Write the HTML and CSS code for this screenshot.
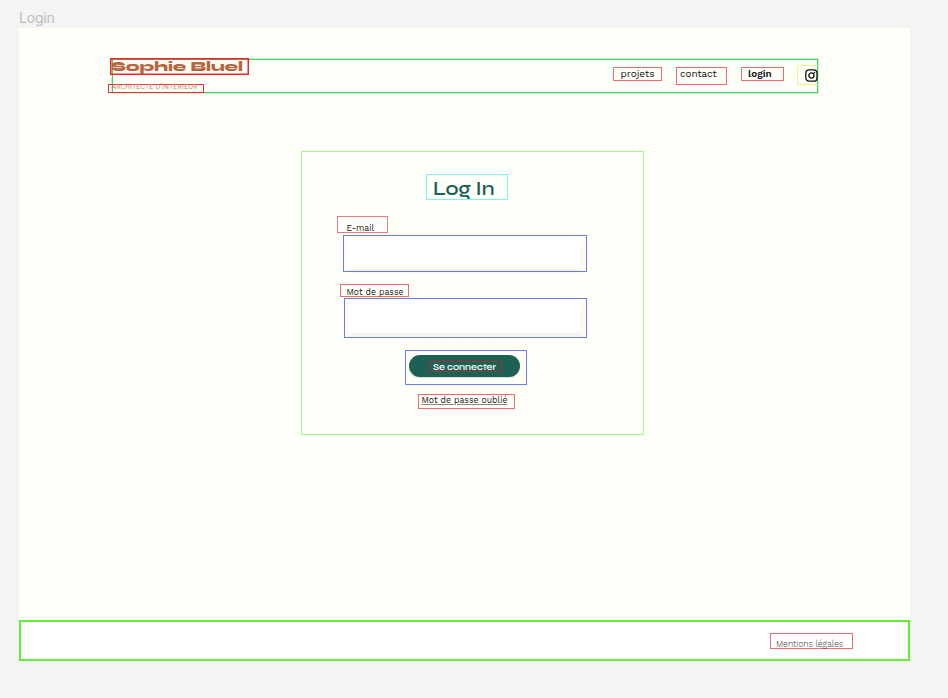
FILE: index.html
```html
<!DOCTYPE html>
<html lang="fr">
<head>
<meta charset="utf-8">
<title>Login</title>
<link rel="stylesheet" href="styles.css">
</head>
<body>
<div class="frame-name">Login</div>
<div class="board">
  <header class="header">
    <div class="brand">
      <h1 class="box brand-name"><svg width="136" height="16" viewBox="0 0 136 16"><text x="0.5" y="12" textLength="131.5" lengthAdjust="spacingAndGlyphs">Sophie Bluel</text></svg></h1>
      <p class="box tagline"><svg width="94" height="7" viewBox="0 0 94 7"><text x="2.5" y="4" textLength="86">ARCHITECTE D’INTÉRIEUR</text></svg></p>
    </div>
    <nav class="nav">
      <a class="box projets">projets</a>
      <a class="box contact">contact</a>
      <a class="box login">login</a>
      <a class="box insta"><svg width="13" height="13" viewBox="0 0 13 13" fill="none" stroke="#111" stroke-width="1.3"><rect x=".8" y=".8" width="11.2" height="11.4" rx="3.3"/><circle cx="6.4" cy="6.5" r="2.6"/><circle cx="9.5" cy="3.4" r=".75" fill="#111" stroke="none"/></svg></a>
    </nav>
  </header>
  <main>
    <form class="form">
      <h2 class="box form-title"><svg width="80" height="24" viewBox="0 0 80 24"><text x="6" y="19.6" textLength="61.5" lengthAdjust="spacingAndGlyphs">Log In</text></svg></h2>
      <label class="box email-label">E-mail</label>
      <div class="box field email"><div class="input"></div></div>
      <label class="box pass-label">Mot de passe</label>
      <div class="box field pass"><div class="input"></div></div>
      <div class="box submit"><div class="button"><span class="box button-label"><svg width="70" height="9" viewBox="0 0 70 9"><text x="3" y="7.5" textLength="63" lengthAdjust="spacingAndGlyphs">Se connecter</text></svg></span></div></div>
      <a class="box forgot"><span>Mot de passe oublié</span></a>
    </form>
  </main>
  <footer class="footer"><a class="box legal">Mentions légales</a></footer>
</div>
</body>
</html>
```
FILE: styles.css
```css
* { box-sizing: border-box; }
body {
  margin: 0;
  height: 698px;
  background: #f4f4f4;
  font-family: "Work Sans", "Noto Sans", sans-serif;
  color: #222;
  overflow: hidden;
}
svg { display: block; overflow: visible; }
.frame-name {
  height: 28px;
  padding: 9px 0 0 19px;
  font: 14px/18px Inter, sans-serif;
  letter-spacing: -.2px;
  color: #bdbdbd;
}
.board {
  width: 891px;
  height: 633px;
  margin-left: 19px;
  background: #fffffa;
  display: flex;
  flex-direction: column;
}
.box {
  display: block;
  margin: 0;
  border: 1px solid #f46a6a;
  font-weight: 400;
  white-space: nowrap;
}
.header {
  width: 706px;
  height: 34px;
  margin: 31px 0 0 93px;
  border: 1px solid #45ca66;
  box-shadow: 0 0 0 .5px #a5e6b4;
  display: flex;
  justify-content: space-between;
  flex: none;
}
.brand { margin: -2px 0 0 -6px; }
.brand-name {
  width: 139px;
  height: 17px;
  margin-left: 3px;
  border: 1px solid #f5252a;
  box-shadow: inset 0 0 0 .5px #f5252a;
}
.brand-name text {
  font: 800 14.5px Syne, Inter, sans-serif;
  fill: #b5663c;
}
.tagline {
  width: 96px;
  height: 9px;
  margin: 9px 0 0 1px;
  border-color: #f5252a;
}
.tagline text {
  font: 6.8px "Work Sans", "Noto Sans", sans-serif;
  fill: #b9805f;
}
.nav {
  display: flex;
  align-items: flex-start;
  margin: 7px -1px 0 0;
  font-size: 10px;
  line-height: 12px;
  color: #111;
}
.projets { width: 49px; height: 14px; padding-left: 6.5px; margin-right: 14px; }
.contact { width: 51px; height: 18px; padding-left: 3px; margin-right: 14px; letter-spacing: -.1px; }
.login { width: 43px; height: 14px; padding-left: 6px; margin-right: 13px; font-weight: 600; }
.insta { width: 21px; height: 20px; margin-top: -2px; padding: 3px 0 0 6.5px; border-color: #f3f38e; border-right-color: #45ca66; }
.form {
  width: 343px;
  height: 284px;
  margin: 58px 0 0 282px;
  padding: 22px 0 0 35px;
  border: 1px solid #a0f986;
  font-size: 8.7px;
}
.form-title { width: 82px; height: 26px; margin-left: 89px; border-color: #7df4f2; }
.form-title text { font: 600 19px Syne, Inter, sans-serif; fill: #1d6154; }
.email-label { width: 51px; height: 17px; margin: 16px 0 2px; padding: 5px 0 0 8.5px; line-height: 12px; border-color: #ed7c88; }
.field { border-color: #6c7ce8; padding: 2px 5px 0 3px; }
.email { width: 244px; height: 37px; margin-left: 6px; }
.input { height: 32px; background: #fff; box-shadow: 1px 3px 4px rgba(0, 0, 0, .06); }
.email .input { height: 31px; }
.pass-label { width: 69px; height: 13px; margin: 12px 0 1px 3px; padding-left: 5.5px; line-height: 14px; }
.pass { width: 243px; height: 40px; margin-left: 7px; }
.submit { width: 122px; height: 35px; margin: 12px 0 0 68px; padding: 4px 0 0 2.5px; border-color: #707ef0; }
.button { width: 111px; height: 22px; padding: 6px 0 0 20px; border-radius: 11px; background: #1d6154; box-shadow: 0 1px 1px rgba(0, 0, 0, .15); }
.button-label { width: 73px; height: 11px; border-color: #983437; }
.button-label text { font: 600 9px Syne, Inter, sans-serif; fill: #fff; }
.forgot { width: 97px; height: 15px; margin: 9px 0 0 81px; padding-left: 2.5px; line-height: 10px; }
.forgot span { text-decoration: underline; text-decoration-color: #888; text-underline-offset: 1px; }
.footer {
  height: 41px;
  margin-top: auto;
  padding: 11px 0 0 749px;
  border: 2px solid #61ef35;
  background: #fff;
}
.legal { width: 83px; height: 16px; padding: 4px 0 0 5px; font-size: 8.8px; font-weight: 300; letter-spacing: -.08px; line-height: 12px; color: #333; }
```
